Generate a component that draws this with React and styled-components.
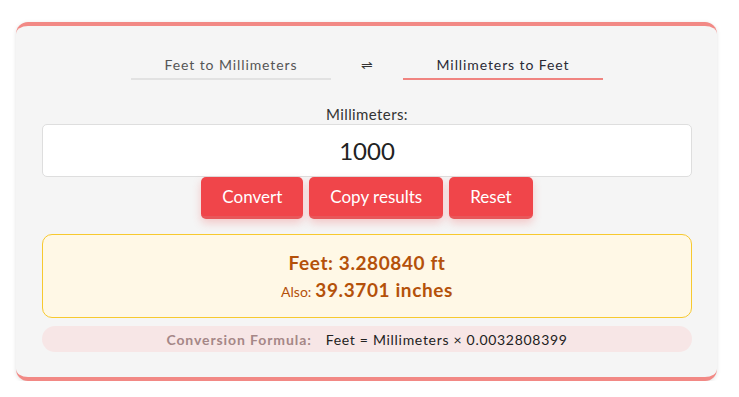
import styled, { createGlobalStyle } from "styled-components";

const GlobalStyle = createGlobalStyle`
  body {
    margin: 0;
    background: #ffffff;
    font-family: Lato, "Noto Sans", sans-serif;
  }
`;

const Page = styled.div`
  padding: 22px 22px 0 16px;
`;

const Card = styled.div`
  background: #f5f5f5;
  border-top: 4px solid #f28985;
  border-bottom: 4px solid #f28985;
  border-radius: 12px;
  box-shadow: 0 1px 4px rgba(0, 0, 0, 0.12);
  padding: 30px 25px 25px 26px;
`;

const Tabs = styled.div`
  display: flex;
  justify-content: center;
  align-items: flex-start;
  margin-bottom: 25px;
`;

const Tab = styled.div`
  width: 200px;
  text-align: center;
  font-size: 14px;
  letter-spacing: 0.9px;
  color: ${(p) => (p.$active ? "#2a2a35" : "#555")};
  padding-bottom: 4px;
  border-bottom: 2px solid ${(p) => (p.$active ? "#f08480" : "#e2e2e2")};
  line-height: 18px;
`;

const Swap = styled.div`
  width: 72px;
  text-align: center;
  font-size: 14px;
  line-height: 18px;
  color: #333;
`;

const Label = styled.div`
  text-align: center;
  font-size: 15px;
  letter-spacing: 0.4px;
  color: #333;
  line-height: 18px;
  margin-bottom: 1px;
`;

const Input = styled.input`
  display: block;
  box-sizing: border-box;
  width: 100%;
  height: 53px;
  border: 1px solid #dedede;
  border-radius: 5px;
  background: #fff;
  text-align: center;
  font-family: Lato, "Noto Sans", sans-serif;
  font-size: 24px;
  color: #222;
  outline: none;
`;

const Buttons = styled.div`
  display: flex;
  justify-content: center;
  gap: 6px;
  margin-bottom: 15px;
`;

const Button = styled.button`
  box-sizing: border-box;
  height: 42px;
  padding: 0 21px;
  border: none;
  border-radius: 5px;
  background: #f0454a;
  border-bottom: 3px solid #e8575a;
  color: #fff;
  font-family: Lato, "Noto Sans", sans-serif;
  font-size: 17px;
  box-shadow: 0 4px 8px rgba(239, 68, 68, 0.25);
  cursor: pointer;
`;

const Result = styled.div`
  background: #fff8e6;
  border: 1px solid #f7c92f;
  border-radius: 10px;
  padding: 16px 0 13px;
  text-align: center;
  color: #b4510a;
  margin-bottom: 8px;
`;

const Main = styled.div`
  font-size: 19px;
  font-weight: 700;
  letter-spacing: 0.6px;
  line-height: 24px;
  margin-bottom: 5px;
`;

const Also = styled.div`
  font-size: 14px;
  line-height: 24px;
  height: 24px;

  strong {
    font-size: 19px;
    font-weight: 700;
    letter-spacing: 0.6px;
    line-height: 1;
    margin-left: 4px;
  }
`;

const Formula = styled.div`
  background: #f7e6e6;
  border-radius: 13px;
  height: 26px;
  display: flex;
  justify-content: center;
  align-items: center;
  font-size: 14px;
  letter-spacing: 0.7px;
  color: #222;
`;

const FormulaLabel = styled.span`
  font-weight: 700;
  letter-spacing: 0.9px;
  color: #a58787;
  margin-right: 14px;
`;

export default function App() {
  return (
    <>
      <GlobalStyle />
      <Page>
        <Card>
          <Tabs>
            <Tab>Feet to Millimeters</Tab>
            <Swap>⇌</Swap>
            <Tab $active>Millimeters to Feet</Tab>
          </Tabs>
          <Label>Millimeters:</Label>
          <Input defaultValue="1000" />
          <Buttons>
            <Button>Convert</Button>
            <Button>Copy results</Button>
            <Button>Reset</Button>
          </Buttons>
          <Result>
            <Main>Feet: 3.280840 ft</Main>
            <Also>
              Also:<strong>39.3701 inches</strong>
            </Also>
          </Result>
          <Formula>
            <FormulaLabel>Conversion Formula:</FormulaLabel>
            Feet = Millimeters × 0.0032808399
          </Formula>
        </Card>
      </Page>
    </>
  );
}
